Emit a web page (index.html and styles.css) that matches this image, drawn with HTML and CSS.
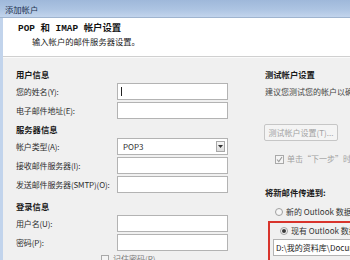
FILE: index.html
```html
<!DOCTYPE html>
<html lang="zh-CN">
<head>
    <meta charset="UTF-8">
    <title>添加帐户</title>
    <link rel="stylesheet" href="styles.css">
</head>
<body>
    <div class="window">
        <div class="titlebar">添加帐户</div>
        <div class="frame">
            <div class="header">
                <div class="header-title">POP 和 IMAP 帐户设置</div>
                <div class="header-sub">输入帐户的邮件服务器设置。</div>
            </div>
            <div class="content">
                <div class="col-left">
                    <div class="group">
                        <div class="group-title">用户信息</div>
                        <div class="row"><span class="label">您的姓名(Y):</span><span class="input caret"></span></div>
                        <div class="row"><span class="label">电子邮件地址(E):</span><span class="input"></span></div>
                    </div>
                    <div class="group">
                        <div class="group-title">服务器信息</div>
                        <div class="row">
                            <span class="label">帐户类型(A):</span>
                            <span class="input select">POP3
                                <span class="drop">
                                    <svg width="5" height="3" viewBox="0 0 5 3"><path d="M0 0h5L2.5 3z" fill="#333"/></svg>
                                </span>
                            </span>
                        </div>
                        <div class="row"><span class="label">接收邮件服务器(I):</span><span class="input"></span></div>
                        <div class="row"><span class="label">发送邮件服务器(SMTP)(O):</span><span class="input"></span></div>
                    </div>
                    <div class="group login">
                        <div class="group-title">登录信息</div>
                        <div class="row"><span class="label">用户名(U):</span><span class="input"></span></div>
                        <div class="row"><span class="label">密码(P):</span><span class="input"></span></div>
                        <div class="remember"><span class="check"></span>记住密码(R)</div>
                    </div>
                </div>
                <div class="col-right">
                    <div class="group-title">测试帐户设置</div>
                    <div class="desc">建议您测试您的帐户以确保条目正确。</div>
                    <div class="btn">测试帐户设置(T)...</div>
                    <div class="auto-test">
                        <span class="check checked">
                            <svg width="7" height="7" viewBox="0 0 7 7"><path d="M1 3.5l1.8 2L6 1" fill="none" stroke="#9a9a9a" stroke-width="1.1"/></svg>
                        </span>单击“下一步”时自动测试帐户设置(S)
                    </div>
                    <div class="group-title deliver">将新邮件传递到:</div>
                    <div class="radio-row first"><span class="radio"></span>新的 Outlook 数据文件(W)</div>
                    <div class="existing">
                        <div class="radio-row"><span class="radio on"></span>现有 Outlook 数据文件(X)</div>
                        <div class="path">D:\我的资料库\Documents\Outlook 文件\</div>
                    </div>
                </div>
            </div>
        </div>
    </div>
</body>
</html>
```

FILE: styles.css
```css
body {
    margin: 0;
    width: 350px;
    height: 260px;
    overflow: hidden;
    font-family: "Noto Sans CJK SC", "Noto Sans", sans-serif;
    font-size: 8px;
    color: #2e2e2e;
    background-color: #f0f0f0;
}
.window {
    width: 350px;
    height: 260px;
    display: flex;
    flex-direction: column;
    overflow: hidden;
}
.titlebar {
    flex-shrink: 0;
    height: 18px;
    line-height: 19px;
    padding-left: 5px;
    color: #1e3250;
    font-size: 8.3px;
    background: linear-gradient(#9fb8da, #adc4e2 55%, #c2d4ec);
    border-bottom: 1px solid #9fb4cf;
    box-sizing: border-box;
}
.frame {
    flex: 1;
    border-left: 3px solid #c2d4ec;
    display: flex;
    flex-direction: column;
    min-height: 0;
}
.header {
    flex-shrink: 0;
    height: 39px;
    background-color: #fff;
    padding-left: 15px;
    padding-top: 4px;
    box-sizing: border-box;
    border-bottom: 1px solid #d0d0d0;
    box-shadow: 0 1px 0 #fafafa;
}
.header-title {
    font-family: "Liberation Mono", "Noto Sans CJK SC", monospace;
    font-weight: bold;
    font-size: 9.4px;
    line-height: 13px;
    color: #111;
}
.header-sub {
    padding-left: 14px;
    line-height: 13px;
    font-size: 8.3px;
    color: #222;
}
.content {
    flex: 1;
    display: flex;
    padding: 9px 0 0 13px;
    white-space: nowrap;
    min-height: 0;
}
.col-left {
    width: 212px;
    flex-shrink: 0;
}
.group-title {
    font-weight: bold;
    font-size: 8.3px;
    line-height: 16px;
    margin-bottom: 1px;
    color: #1a1a1a;
}
.group {
    margin-bottom: 2px;
}
.group.login {
    margin-top: 5px;
}
.row {
    display: flex;
    align-items: center;
    height: 17px;
    margin-bottom: 2px;
}
.label {
    width: 101px;
    flex-shrink: 0;
    letter-spacing: -0.15px;
}
.input {
    width: 111px;
    height: 17px;
    box-sizing: border-box;
    border: 1px solid #b3b3b3;
    background-color: #fff;
    position: relative;
}
.caret::before {
    content: "";
    position: absolute;
    left: 3px;
    top: 3px;
    width: 1px;
    height: 9px;
    background-color: #222;
}
.select {
    display: flex;
    align-items: center;
    justify-content: space-between;
    padding: 0 2px 0 5px;
    line-height: 15px;
}
.drop {
    width: 9px;
    height: 11px;
    box-sizing: border-box;
    border: 1px solid #a8a8a8;
    background: linear-gradient(#f6f6f6, #dcdcdc);
    display: flex;
    align-items: center;
    justify-content: center;
}
.remember {
    display: flex;
    align-items: center;
    padding-left: 85px;
    line-height: 12px;
    color: #777;
}
.check {
    width: 8px;
    height: 8px;
    box-sizing: border-box;
    border: 1px solid #a9a9a9;
    background-color: #f4f4f4;
    margin-right: 4px;
    display: flex;
    align-items: center;
    justify-content: center;
}
.col-right {
    margin-left: 37px;
    flex-shrink: 0;
}
.desc {
    line-height: 17px;
    color: #444;
}
.btn {
    width: 74px;
    height: 17px;
    margin-top: 24px;
    margin-left: -1px;
    box-sizing: border-box;
    border: 1px solid #c6c6c6;
    border-radius: 2px;
    background-color: #f4f4f4;
    color: #a2a2a2;
    text-align: center;
    line-height: 15px;
}
.auto-test {
    display: flex;
    align-items: center;
    margin-top: 11px;
    padding-left: 10px;
    line-height: 14px;
    color: #a0a0a0;
}
.auto-test .check {
    width: 9px;
    height: 9px;
    margin-right: 3px;
}
.group-title.deliver {
    margin-top: 18px;
}
.radio-row {
    display: flex;
    align-items: center;
    line-height: 16px;
    padding-left: 10px;
    color: #333;
}
.radio-row.first {
    margin-top: 4px;
}
.radio {
    width: 8px;
    height: 8px;
    box-sizing: border-box;
    border: 1px solid #a0a0a0;
    border-radius: 50%;
    background-color: #f6f6f6;
    margin-right: 3px;
    display: flex;
    align-items: center;
    justify-content: center;
}
.radio.on::after {
    content: "";
    width: 4px;
    height: 4px;
    border-radius: 50%;
    background-color: #3a3a3a;
}
.existing {
    margin-left: 3px;
    margin-top: 1px;
    border: 2px solid #d8342c;
    padding: 0 0 6px 3px;
    width: 110px;
}
.existing .radio-row {
    padding-left: 7px;
}
.path {
    height: 17px;
    box-sizing: border-box;
    border: 1px solid #b3b3b3;
    background-color: #fff;
    padding-left: 2px;
    line-height: 15px;
    color: #222;
}
```
